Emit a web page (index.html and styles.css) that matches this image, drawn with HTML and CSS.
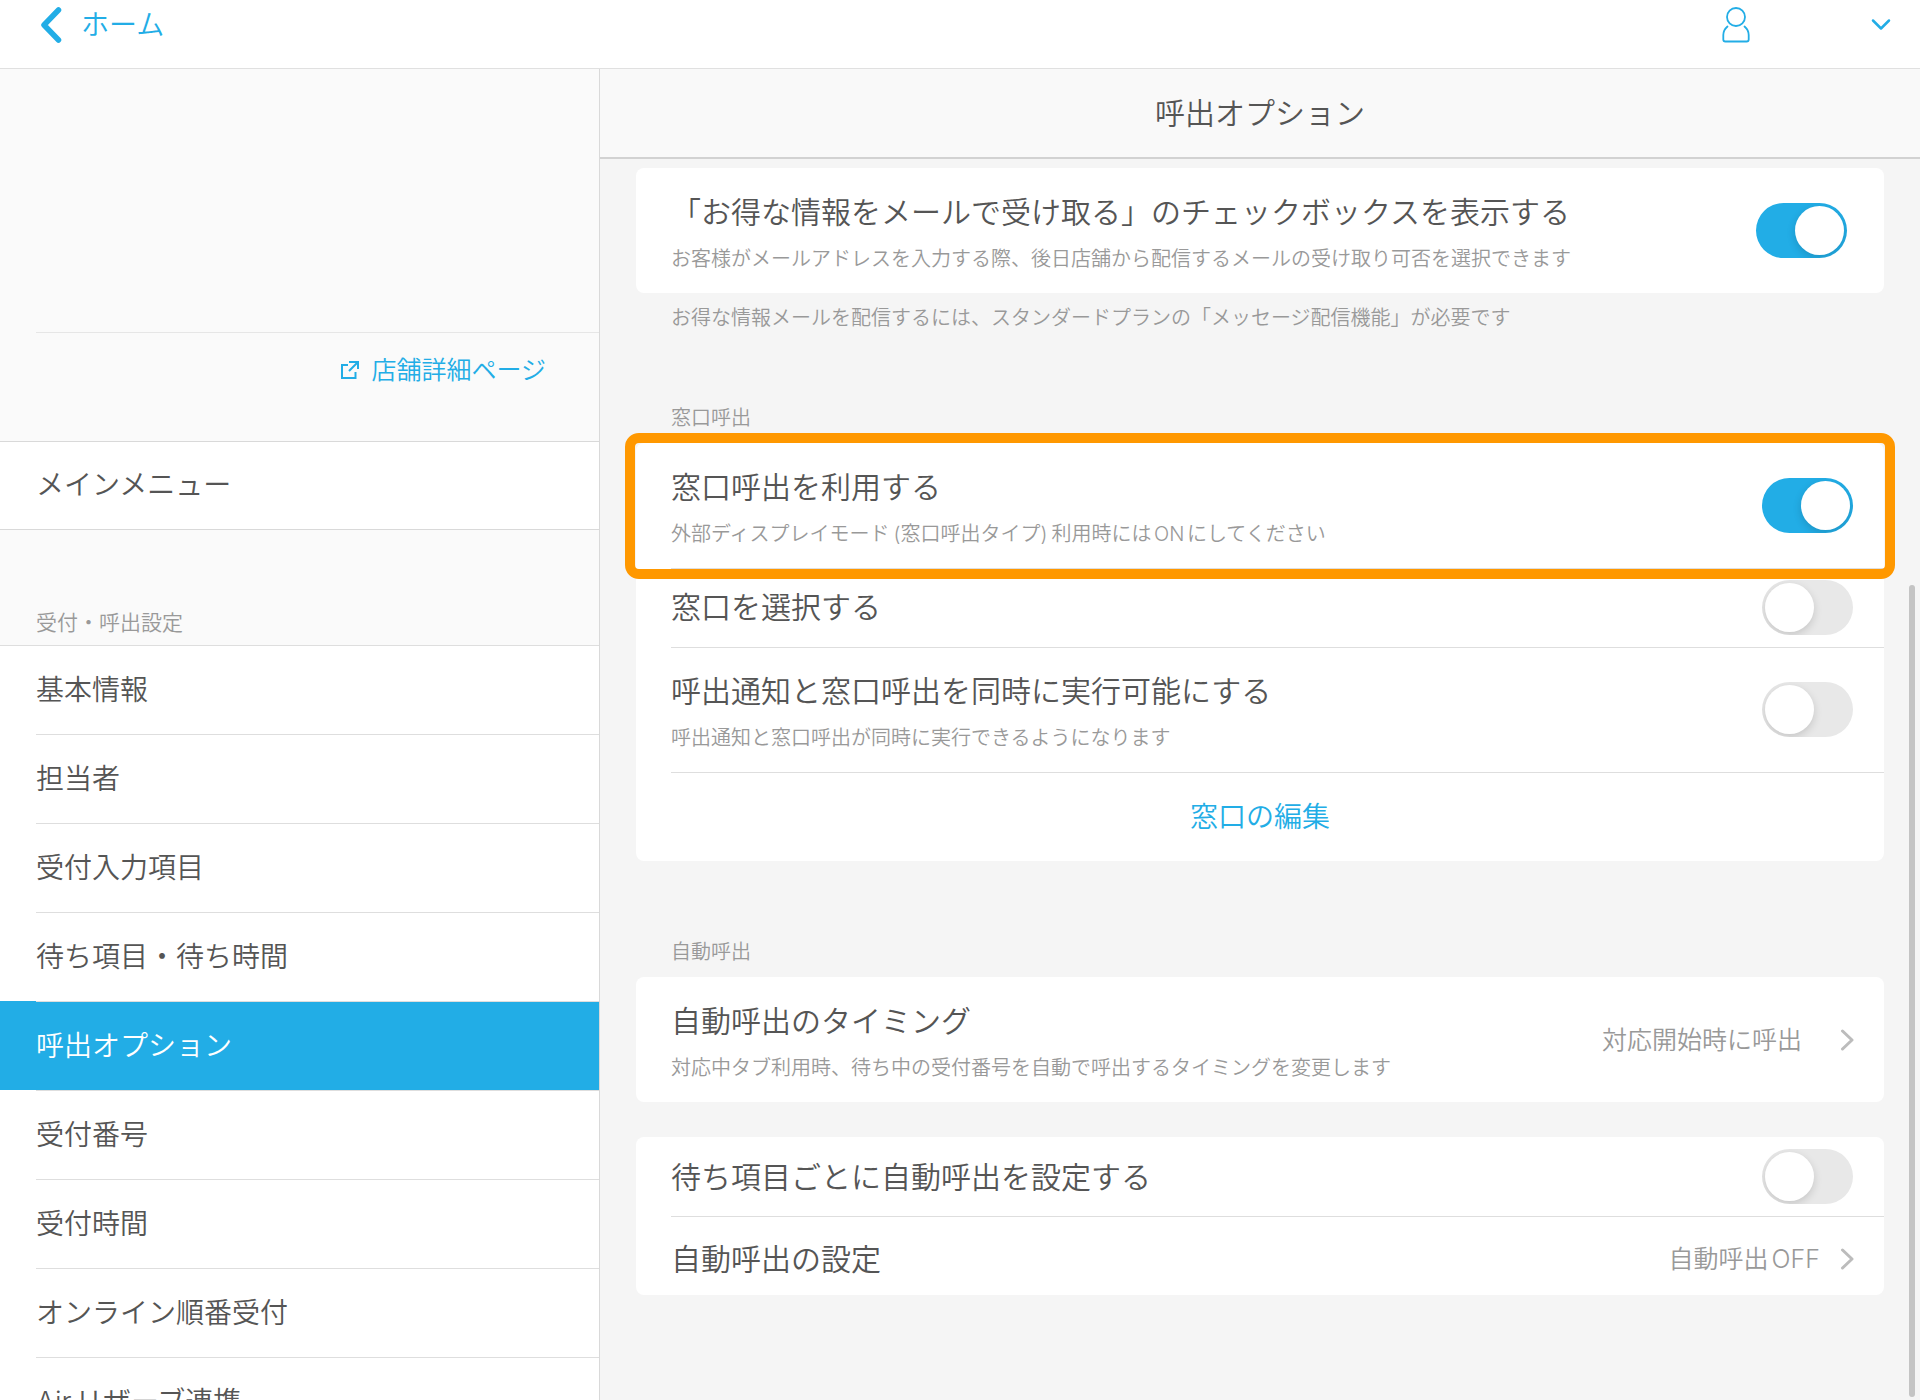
FILE: index.html
```html
<!DOCTYPE html>
<html lang="ja">
<head>
<meta charset="utf-8">
<meta name="viewport" content="width=device-width, initial-scale=1">
<title>呼出オプション</title>
<link rel="stylesheet" href="styles.css">
</head>
<body>
<div class="app">
  <header class="topbar">
    <a class="back" href="#">
      <svg width="22" height="36" viewBox="0 0 22 36" aria-hidden="true"><path d="M18.5 3 4 18 18.500 33" fill="none" stroke="currentColor" stroke-width="5.500" stroke-linecap="round" stroke-linejoin="round"/></svg>
      <span>ホーム</span>
    </a>
    <button class="account" type="button" aria-label="アカウント">
      <svg width="28" height="36" viewBox="0 0 28 36" aria-hidden="true"><g fill="none" stroke="currentColor" stroke-width="1.800" stroke-linecap="round"><circle cx="14" cy="10" r="9"/><path d="M5.500 19.500C2 22.500 1.300 25 1.300 28v4.500a2 2 0 0 0 2 2h21.400a2 2 0 0 0 2-2V28c0-3-.7-5.500-4.200-8.500"/></g></svg>
      <svg width="20" height="14" viewBox="0 0 20 14" aria-hidden="true"><path d="M2 2.500 10 10.500 18 2.500" fill="none" stroke="currentColor" stroke-width="2.500" stroke-linecap="round" stroke-linejoin="round"/></svg>
    </button>
  </header>

  <div class="body">
    <nav class="sidebar" aria-label="設定メニュー">
      <div class="shop"></div>
      <div class="shop-link-row">
        <a class="shop-link" href="#">
          <svg width="18" height="18" viewBox="0 0 18 18" aria-hidden="true"><g fill="none" stroke="currentColor" stroke-width="2"><path d="M7 4H1v13h13.500v-6M8 1h9v7M16.500 1.500 8 10"/></g></svg>
          <span>店舗詳細ページ</span>
        </a>
      </div>
      <a class="menu-main" href="#">メインメニュー</a>
      <h2 class="menu-label">受付・呼出設定</h2>
      <ul class="menu">
        <li><a href="#">基本情報</a></li>
        <li><a href="#">担当者</a></li>
        <li><a href="#">受付入力項目</a></li>
        <li><a href="#">待ち項目・待ち時間</a></li>
        <li class="current"><a href="#" aria-current="page">呼出オプション</a></li>
        <li><a href="#">受付番号</a></li>
        <li><a href="#">受付時間</a></li>
        <li><a href="#">オンライン順番受付</a></li>
        <li><a href="#">Airリザーブ連携</a></li>
      </ul>
    </nav>

    <main class="content">
      <h1 class="page-title">呼出オプション</h1>
      <div class="settings">
        <div class="card">
          <div class="row row-wide-end">
            <label class="texts" for="mail-optin">
              <span class="name">「お得な情報をメールで受け取る」のチェックボックスを表示する</span>
              <span class="hint">お客様がメールアドレスを入力する際、後日店舗から配信するメールの受け取り可否を選択できます</span>
            </label>
            <input class="switch" type="checkbox" role="switch" id="mail-optin" checked>
          </div>
        </div>
        <p class="note">お得な情報メールを配信するには、スタンダードプランの「メッセージ配信機能」が必要です</p>

        <h2 class="label">窓口呼出</h2>
        <div class="card">
          <div class="row row-highlight">
            <label class="texts" for="counter-use">
              <span class="name">窓口呼出を利用する</span>
              <span class="hint">外部ディスプレイモード<span class="aside">(窓口呼出タイプ)</span>利用時にはONにしてください</span>
            </label>
            <input class="switch" type="checkbox" role="switch" id="counter-use" checked>
          </div>
          <div class="row row-single">
            <label class="name" for="counter-select">窓口を選択する</label>
            <input class="switch" type="checkbox" role="switch" id="counter-select">
          </div>
          <div class="row">
            <label class="texts" for="counter-both">
              <span class="name">呼出通知と窓口呼出を同時に実行可能にする</span>
              <span class="hint">呼出通知と窓口呼出が同時に実行できるようになります</span>
            </label>
            <input class="switch" type="checkbox" role="switch" id="counter-both">
          </div>
          <button class="row row-action" type="button">窓口の編集</button>
        </div>

        <h2 class="label">自動呼出</h2>
        <div class="card">
          <a class="row" href="#">
            <span class="texts">
              <span class="name">自動呼出のタイミング</span>
              <span class="hint">対応中タブ利用時、待ち中の受付番号を自動で呼出するタイミングを変更します</span>
            </span>
            <span class="value value-spaced">対応開始時に呼出</span>
            <svg class="chevron" width="14" height="22" viewBox="0 0 14 22" aria-hidden="true"><path d="M2.500 2 12 11 2.500 20"/></svg>
          </a>
        </div>

        <div class="card card-follow">
          <div class="row row-single">
            <label class="name" for="auto-each">待ち項目ごとに自動呼出を設定する</label>
            <input class="switch" type="checkbox" role="switch" id="auto-each">
          </div>
          <a class="row row-single row-low" href="#">
            <span class="name">自動呼出の設定</span>
            <span class="value">自動呼出OFF</span>
            <svg class="chevron" width="14" height="22" viewBox="0 0 14 22" aria-hidden="true"><path d="M2.500 2 12 11 2.500 20"/></svg>
          </a>
        </div>
      </div>
      <div class="scroll-thumb"></div>
    </main>
  </div>
</div>
</body>
</html>
```
FILE: styles.css
```css
:root {
  --blue: #22ade6;
  --text: #555;
  --muted: #999;
  --line: #dedede;
}

* { box-sizing: border-box; }

body {
  margin: 0;
  background: #fff;
  color: var(--text);
  font-family: Inter, "Noto Sans CJK JP", sans-serif;
  font-weight: 350;
  text-autospace: normal;
}

a { color: inherit; text-decoration: none; }
h1, h2, p, ul { margin: 0; padding: 0; font-weight: inherit; }
ul { list-style: none; }
button {
  border: 0;
  padding: 0;
  background: none;
  color: inherit;
  font: inherit;
  cursor: pointer;
}
svg { display: block; flex: none; }

.app {
  display: flex;
  flex-direction: column;
  height: 100vh;
  overflow: hidden;
}

/* Top bar */
.topbar {
  display: flex;
  justify-content: space-between;
  align-items: center;
  flex: none;
  padding: 5px 29px 23px 40px;
  border-bottom: 1px solid #e0e0e0;
  color: var(--blue);
}
.back {
  display: flex;
  align-items: center;
  gap: 19px;
  font-size: 28px;
  line-height: 40px;
}
.account {
  display: flex;
  align-items: center;
  gap: 121px;
}

.body {
  display: flex;
  flex: 1;
  min-height: 0;
}

/* Sidebar */
.sidebar {
  flex: none;
  width: 600px;
  overflow-y: auto;
  scrollbar-width: none;
  border-right: 1px solid #d9d9d9;
  background: #fafafa;
  font-size: 28px;
}
.shop { height: 263px; }
.shop-link-row {
  display: flex;
  justify-content: flex-end;
  margin-left: 36px;
  padding: 17px 53px 51px 0;
  border-top: 1px solid #e6e6e6;
}
.shop-link {
  display: flex;
  align-items: center;
  gap: 12px;
  color: var(--blue);
  font-size: 25px;
  line-height: 40px;
}
.menu-main {
  display: block;
  padding: 0 36px;
  border: solid #d9d9d9;
  border-width: 1px 0;
  background: #fff;
  line-height: 87px;
}
.menu-label {
  padding: 78px 36px 7px;
  color: var(--muted);
  font-size: 21px;
  line-height: 30px;
}
.menu { background: #fff; }
.menu li { padding-left: 36px; }
.menu li:first-child {
  padding-left: 0;
}
.menu li:first-child a { padding-left: 36px; }
.menu a {
  display: block;
  border-top: 1px solid var(--line);
  line-height: 88px;
}
.menu .current {
  background: var(--blue);
  color: #fff;
}

/* Settings pane */
.content {
  position: relative;
  display: flex;
  flex-direction: column;
  flex: 1;
  min-width: 0;
  background: #f5f5f5;
}
.page-title {
  flex: none;
  border-bottom: 2px solid #d2d2d2;
  background: #f9f9f9;
  font-size: 30px;
  line-height: 88px;
  text-align: center;
}
.settings {
  flex: 1;
  min-height: 0;
  padding: 9px 36px 36px;
  overflow-y: auto;
  scrollbar-width: none;
}
.card {
  border-radius: 8px;
  background: #fff;
}
.card-follow { margin-top: 35px; }

.row {
  display: flex;
  align-items: center;
  min-height: 125px;
  margin-left: 35px;
  padding-right: 31px;
}
.row + .row {
  padding-bottom: 2px;
  border-top: 1px solid var(--line);
}
.row-wide-end { padding-right: 37px; }
.row-single { min-height: 79px; }
.row-low { padding-top: 8px; }
.card .row-action {
  justify-content: center;
  width: calc(100% - 35px);
  min-height: 89px;
  padding: 0 66px 4px 31px;
  color: var(--blue);
  font-size: 28px;
}
.row-highlight { position: relative; }
.row-highlight::after {
  content: "";
  position: absolute;
  inset: -10px -11px -11px -46px;
  z-index: 1;
  border: 10px solid #ff9800;
  border-radius: 14px;
  pointer-events: none;
}

.texts {
  display: flex;
  flex: 1;
  flex-direction: column;
  gap: 14px;
  min-width: 0;
  padding-top: 7px;
}
.name {
  flex: 1;
  font-size: 30px;
  line-height: 36px;
}
.hint, .note, .label {
  color: var(--muted);
  font-size: 20px;
  line-height: 30px;
}
.aside { margin: 0 4px; }
.note { padding: 10px 35px 0; }
.label { padding: 76px 35px 10px; }
.note + .label { padding-top: 70px; }

.value {
  margin-right: 20px;
  color: var(--muted);
  font-size: 25px;
  line-height: 36px;
}
.value-spaced { margin-right: 38px; }
.chevron {
  margin-right: -1px;
  fill: none;
  stroke: #bcbcbc;
  stroke-width: 3;
  stroke-linecap: round;
  stroke-linejoin: round;
}

.switch {
  appearance: none;
  flex: none;
  width: 91px;
  height: 55px;
  margin: 0;
  padding: 3px;
  border-radius: 28px;
  background: #e8e8e8;
  cursor: pointer;
  overflow: hidden;
}
.switch::before {
  content: "";
  display: block;
  width: 49px;
  height: 49px;
  border-radius: 50%;
  background: #fff;
  box-shadow: 0 3px 8px rgba(0, 0, 0, .15);
}
.switch:checked { background: var(--blue); }
.switch:checked::before { margin-left: auto; }

.scroll-thumb {
  position: absolute;
  top: 516px;
  right: 5px;
  bottom: 3px;
  width: 6px;
  border-radius: 3px;
  background: #c4c4c4;
}
```
